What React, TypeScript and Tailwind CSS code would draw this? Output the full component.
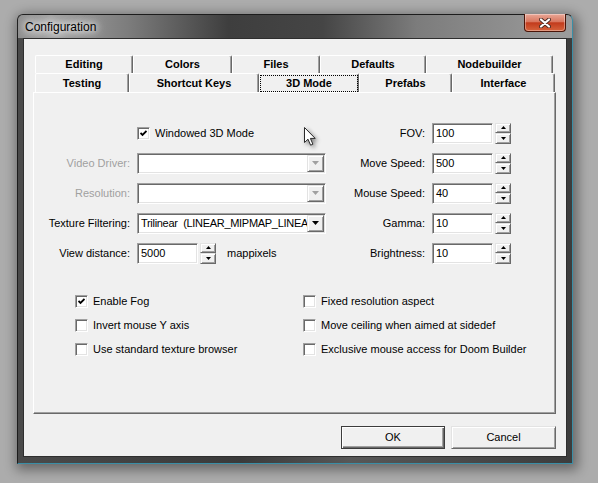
import React from 'react';

// classic 3D edges
const sunken =
  'border border-t-[#a0a0a0] border-l-[#a0a0a0] border-r-white border-b-white shadow-[inset_1px_1px_0_#696969,inset_-1px_-1px_0_#e3e3e3]';
const raised =
  'bg-[#f0f0f0] border border-t-[#e3e3e3] border-l-[#e3e3e3] border-r-[#696969] border-b-[#696969] shadow-[inset_1px_1px_0_#ffffff,inset_-1px_-1px_0_#a0a0a0]';

const Arrow = ({ down, color = '#000', w = 7 }: { down?: boolean; color?: string; w?: number }) => {
  const h = Math.ceil(w / 2);
  return (
    <svg width={w} height={h} viewBox={`0 0 ${w} ${h}`}>
      <path d={down ? `M0 0H${w}L${w / 2} ${h}Z` : `M0 ${h}H${w}L${w / 2} 0Z`} fill={color} />
    </svg>
  );
};

const Check = ({ checked }: { checked?: boolean }) => (
  <div className={`w-[13px] h-[13px] shrink-0 bg-white flex items-center justify-center ${sunken}`}>
    {checked && (
      <svg width="7" height="7" viewBox="0 0 7 7">
        <path d="M0.5 3 L2.5 5 L6.5 1" stroke="#000" strokeWidth="1.8" fill="none" />
      </svg>
    )}
  </div>
);

const Combo = ({ text, disabled }: { text?: string; disabled?: boolean }) => (
  <div className={`w-[189px] h-[21px] bg-white p-[1px] flex ${sunken}`}>
    <div className="flex-1 overflow-hidden whitespace-pre pl-[2px] leading-[17px] tracking-[-0.3px]">{text}</div>
    <div className={`w-[17px] flex items-center justify-center ${raised}`}>
      <Arrow down color={disabled ? '#a0a0a0' : '#000'} />
    </div>
  </div>
);

const Spin = ({ value }: { value: string }) => (
  <div className="flex items-center">
    <div className={`w-[61px] h-[21px] bg-white p-[1px] pl-[3px] leading-[17px] ${sunken}`}>{value}</div>
    <div className="ml-[2px] w-[16px] h-[21px] flex flex-col">
      <div className={`h-[10px] flex items-center justify-center ${raised}`}>
        <Arrow w={5} />
      </div>
      <div className={`h-[11px] flex items-center justify-center ${raised}`}>
        <Arrow down w={5} />
      </div>
    </div>
  </div>
);

const row1 = [
  { label: 'Editing', w: 'w-[98px]' },
  { label: 'Colors', w: 'w-[99px]' },
  { label: 'Files', w: 'w-[88px]' },
  { label: 'Defaults', w: 'w-[106px]' },
  { label: 'Nodebuilder', w: 'w-[127px]' },
];

const row2 = [
  { label: 'Testing', w: 'w-[94px]' },
  { label: 'Shortcut Keys', w: 'w-[130px]' },
  { label: '3D Mode', w: 'w-[100px]', selected: true },
  { label: 'Prefabs', w: 'w-[93px]' },
  { label: 'Interface', w: 'w-[103px]' },
];

const tabCls =
  'h-full flex items-center justify-center font-bold border-l border-t border-r border-l-white border-t-white border-r-[#696969] shadow-[inset_-1px_0_0_#a0a0a0] rounded-t-[2px]';

const rightFields = [
  { label: 'FOV:', value: '100' },
  { label: 'Move Speed:', value: '500' },
  { label: 'Mouse Speed:', value: '40' },
  { label: 'Gamma:', value: '10' },
  { label: 'Brightness:', value: '10' },
];

const options = [
  [
    { label: 'Enable Fog', checked: true },
    { label: 'Invert mouse Y axis' },
    { label: 'Use standard texture browser' },
  ],
  [
    { label: 'Fixed resolution aspect' },
    { label: 'Move ceiling when aimed at sidedef' },
    { label: 'Exclusive mouse access for Doom Builder' },
  ],
];

export default function App() {
  return (
    <div className="relative w-[598px] h-[483px] overflow-hidden bg-[#acacac] pt-[14px] pl-[17px] font-['Liberation_Sans',Arial,sans-serif] text-[11px] text-black">
      <div className="w-[556px] h-[450px] flex flex-col rounded-t-[6px] border border-[#1c1c1c] border-r-[#3a8ea6] border-b-[#3a8ea6] bg-[linear-gradient(to_right,#4a4a4a,#3a3a3a_40%,#575757_60%,#3c3c3c)] shadow-[2px_3px_12px_3px_rgba(0,0,0,0.4)]">
        {/* title bar */}
        <div className="h-[23px] flex items-start rounded-t-[5px] bg-[linear-gradient(to_right,#8e8e8e_0%,#a2a2a2_6%,#7c7c7c_20%,#3e3e3e_38%,#454545_55%,#7c7c7c_72%,#9c9c9c_100%)]">
          <div className="pl-[7px] h-full flex items-center text-[12px] text-black [text-shadow:0_0_6px_#ffffff,0_0_10px_#ffffff,0_0_14px_#ffffff]">
            Configuration
          </div>
          <div className="ml-auto mr-[6px] -mt-[1px] w-[42px] h-[18px] rounded-b-[4px] border border-[#4a1408] border-t-0 bg-[linear-gradient(to_bottom,#e9a797_0%,#d9775f_45%,#c23b1c_52%,#d6643d_100%)] shadow-[inset_0_0_0_1px_rgba(255,255,255,0.35)] flex items-center justify-center">
            <svg width="12" height="10" viewBox="0 0 12 10">
              <path d="M2 1.5 L10 8.5 M10 1.5 L2 8.5" stroke="#4a2a22" strokeWidth="4" strokeLinecap="round" />
              <path d="M2 1.5 L10 8.5 M10 1.5 L2 8.5" stroke="#ffffff" strokeWidth="2.2" strokeLinecap="round" />
            </svg>
          </div>
        </div>

        {/* client area */}
        <div className="mx-[5px] h-[419px] border border-[#2e2e2e] bg-[#f0f0f0] pt-[16px] pl-[9px] flex flex-col">
          <div className="w-[523px]">
            <div className="h-[18px] ml-[2px] flex">
              {row1.map((t) => (
                <div key={t.label} className={`${t.w} ${tabCls}`}>
                  {t.label}
                </div>
              ))}
            </div>
            <div className="h-[19px] ml-[2px] flex">
              {row2.map((t) => (
                <div key={t.label} className={`${t.w} ${tabCls}`}>
                  {t.selected ? (
                    <div className="w-full h-[17px] border border-dotted border-black flex items-center justify-center">
                      {t.label}
                    </div>
                  ) : (
                    t.label
                  )}
                </div>
              ))}
            </div>

            {/* page */}
            <div className="h-[322px] border border-t-white border-l-white border-r-[#696969] border-b-[#696969] shadow-[inset_-1px_-1px_0_#a0a0a0] flex flex-col">
              <div className="mt-[25px] flex">
                <div className="w-[306px] flex flex-col">
                  <div className="h-[30px] flex items-center pl-[103px] gap-[5px]">
                    <Check checked />
                    <span>Windowed 3D Mode</span>
                  </div>
                  <div className="h-[30px] flex items-center">
                    <div className="w-[96px] text-right text-[#a0a0a0]">Video Driver:</div>
                    <div className="ml-[7px]">
                      <Combo disabled />
                    </div>
                  </div>
                  <div className="h-[30px] flex items-center">
                    <div className="w-[96px] text-right text-[#a0a0a0]">Resolution:</div>
                    <div className="ml-[7px]">
                      <Combo disabled />
                    </div>
                  </div>
                  <div className="h-[30px] flex items-center">
                    <div className="w-[96px] text-right">Texture Filtering:</div>
                    <div className="ml-[7px]">
                      <Combo text="Trilinear  (LINEAR_MIPMAP_LINEAR)" />
                    </div>
                  </div>
                  <div className="h-[30px] flex items-center">
                    <div className="w-[96px] text-right">View distance:</div>
                    <div className="ml-[7px]">
                      <Spin value="5000" />
                    </div>
                    <span className="ml-[11px]">mappixels</span>
                  </div>
                </div>
                <div className="flex flex-col">
                  {rightFields.map((f) => (
                    <div key={f.label} className="h-[30px] flex items-center">
                      <div className="w-[85px] text-right">{f.label}</div>
                      <div className="ml-[7px]">
                        <Spin value={f.value} />
                      </div>
                    </div>
                  ))}
                </div>
              </div>

              <div className="mt-[21px] flex pl-[41px]">
                {options.map((col, i) => (
                  <div key={i} className={i === 0 ? 'w-[228px] flex flex-col' : 'flex flex-col'}>
                    {col.map((o) => (
                      <div key={o.label} className="h-[24px] flex items-center gap-[5px]">
                        <Check checked={o.checked} />
                        <span>{o.label}</span>
                      </div>
                    ))}
                  </div>
                ))}
              </div>
            </div>

            <div className="mt-[12px] flex justify-end gap-[6px]">
              <button className="w-[104px] h-[23px] bg-[#f0f0f0] border border-[#3c3c3c] shadow-[inset_1px_1px_0_#ffffff,inset_-1px_-1px_0_#696969,inset_-2px_-2px_0_#a0a0a0]">
                OK
              </button>
              <button className={`w-[105px] h-[23px] ${raised}`}>Cancel</button>
            </div>
          </div>
        </div>
      </div>

      {/* mouse pointer */}
      <svg
        className="absolute left-[304px] top-[127px] drop-shadow-[2px_2px_2px_rgba(0,0,0,0.45)]"
        width="13"
        height="20"
        viewBox="0 0 13 20"
      >
        <path d="M0.5 0.5 L0.5 15.5 L4 12.2 L6.6 18.2 L8.9 17.2 L6.4 11.4 L11.2 11.4 Z" fill="#ffffff" stroke="#2a2a2a" strokeWidth="1" strokeLinejoin="round" />
      </svg>
    </div>
  );
}
